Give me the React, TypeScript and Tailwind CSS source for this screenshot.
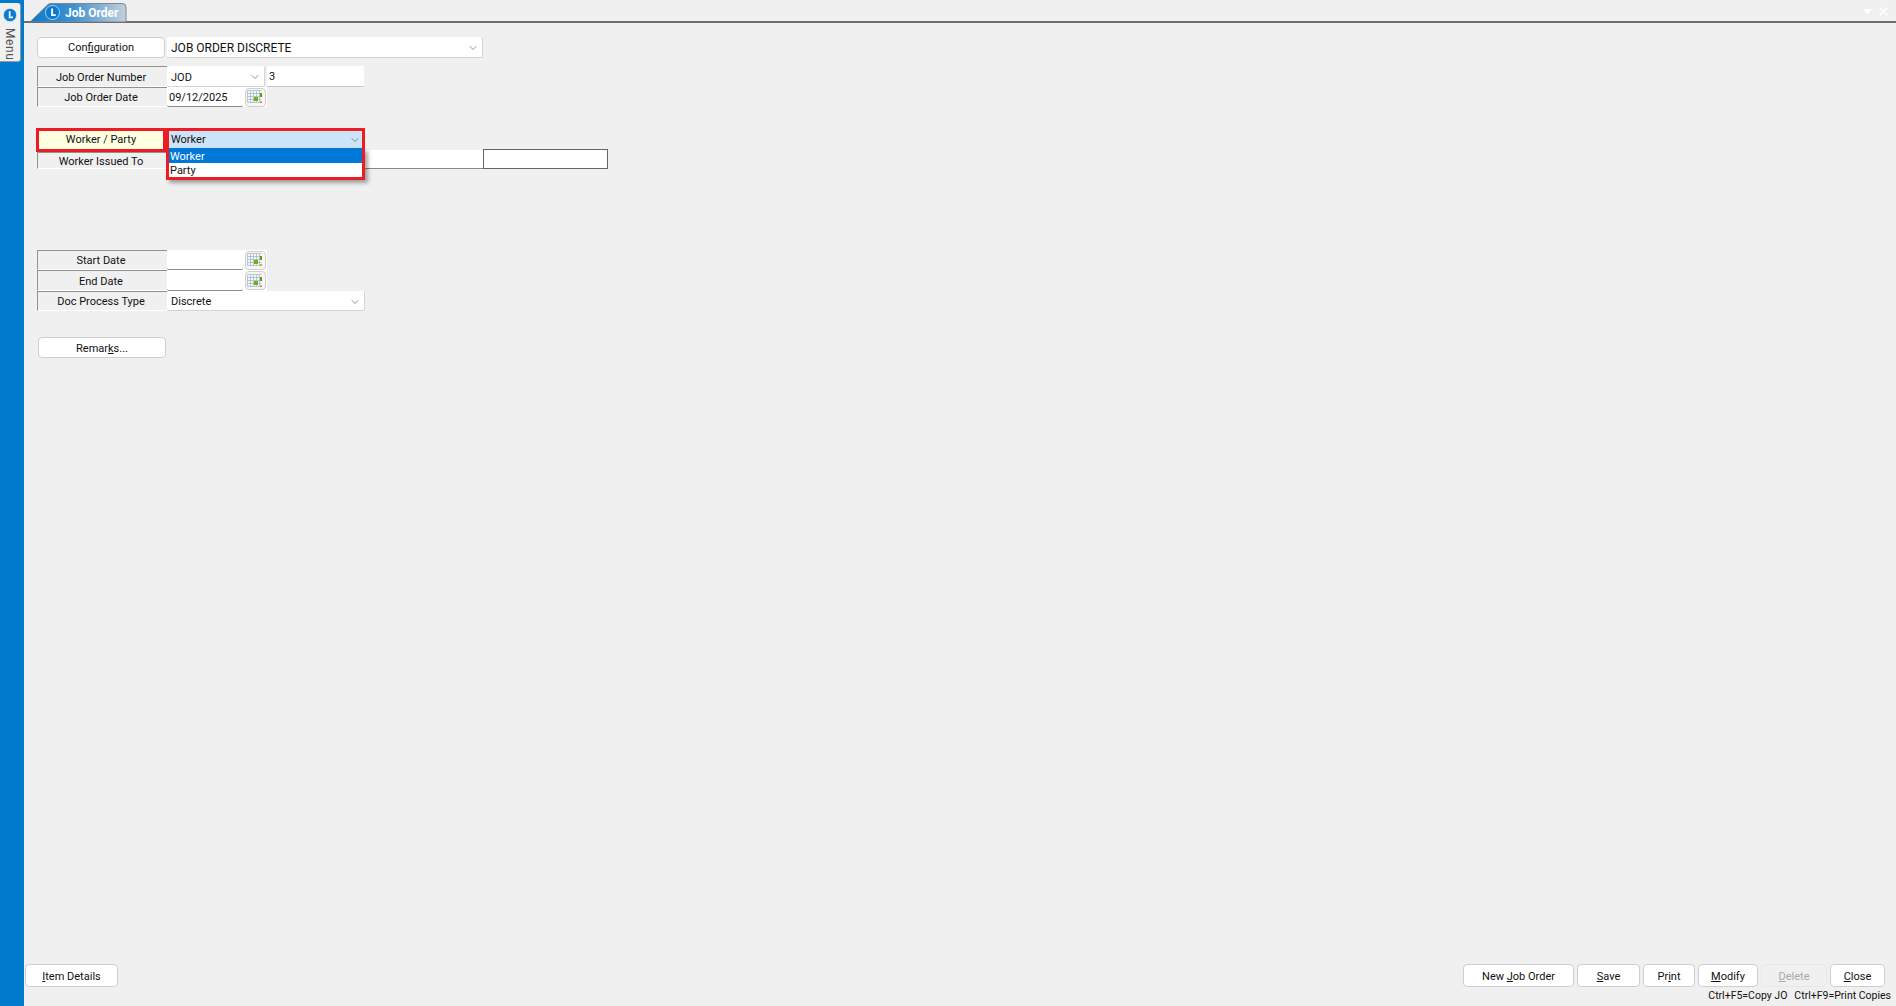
import { ChevronDown } from "lucide-react";
import type { ReactNode } from "react";

function FieldLabel({ children, className = "w-[130px] h-[20px]" }: { children: ReactNode; className?: string }) {
  return (
    <div
      className={`${className} shrink-0 flex items-center justify-center pr-[3px] pt-[1px] border-t border-l border-t-[#909090] border-l-[#909090] border-b border-b-white bg-[#f0f0f0]`}
    >
      {children}
    </div>
  );
}

function Combo({ value, className }: { value: string; className: string }) {
  return (
    <div className={`${className} flex items-center justify-between bg-white rounded-[2px] border-b border-r border-[#d4d4d4] pl-[4px] pr-[3px] pt-[2px]`}>
      <span>{value}</span>
      <ChevronDown size={12} strokeWidth={1.3} className="text-[#555]" />
    </div>
  );
}

function DateInput({ value = "" }: { value?: string }) {
  return (
    <div className="w-[76px] h-full bg-white border-b border-[#8a8a8a] rounded-b-[2px] pl-[2px] pt-[1px] flex items-center">
      {value}
    </div>
  );
}

function CalendarButton() {
  return (
    <div className="w-[24px] h-full bg-white flex items-center justify-center">
      <div className="w-[21px] h-[19px] rounded-[4px] border border-[#cfcfcf] bg-[#f6f6f6] flex items-center justify-center">
        <svg width="16" height="14" viewBox="0 0 16 14">
          <rect x="0.5" y="0.5" width="14" height="12" fill="#f4f7f9" />
          <path d="M0.5 1v11.5M3.5 1v11.5M6.5 1v11.5M9.5 1v11.5M12.5 1v11.5M0.5 0.5h14M0.5 3.5h14M0.5 6.5h14M0.5 9.5h14M0.5 12.5h14" stroke="#9db4c0" strokeWidth="0.7" />
          <rect x="7" y="7" width="4" height="4" fill="#76ad12" />
          <rect x="13" y="3" width="2" height="4" fill="#5f9a10" />
          <rect x="13" y="11" width="2" height="2" fill="#e8a04a" />
        </svg>
      </div>
    </div>
  );
}

function ActionButton({ children, className, disabled }: { children: ReactNode; className: string; disabled?: boolean }) {
  return (
    <div
      className={`${className} h-[23px] pt-[1px] flex items-center justify-center rounded-[4px] border ${
        disabled ? "bg-[#f0f0f0] border-[#e8e8e8] text-[#a8a8a8]" : "bg-white border-[#cfcfcf]"
      }`}
    >
      {children}
    </div>
  );
}

function LogoBall({ size }: { size: number }) {
  return (
    <svg width={size} height={size} viewBox="0 0 16 16">
      <circle cx="8" cy="8" r="7.5" fill="#0a7bd0" stroke="#dbeaf6" strokeWidth="0.8" />
      <path d="M6.6 3.8h2v6h2.8v2H6.6z" fill="#fff" />
    </svg>
  );
}

export default function App() {
  return (
    <div className="w-[1896px] h-[1006px] overflow-hidden flex bg-[#f0f0f0] text-[11px] leading-none text-[#111] font-['Roboto',Arial,sans-serif]">
      {/* Left menu strip */}
      <div className="w-[24px] shrink-0 bg-[#007acc] pt-[3px]">
        <div className="w-[21px] h-[59px] bg-[#f0f0f0] rounded-r-[3px] border-r border-b border-[#9a9a9a] flex flex-col items-center pt-[5px] gap-[6px]">
          <LogoBall size={14} />
          <span className="[writing-mode:vertical-rl] text-[12px] tracking-[0.6px] text-[#555]">Menu</span>
        </div>
      </div>

      <div className="flex-1 flex flex-col min-w-0">
        {/* Tab header */}
        <div className="h-[23px] shrink-0 border-b-2 border-[#6d6d6d] flex justify-between pl-[6px] pr-[8px] pt-[3px]">
          <div className="relative w-[97px] h-[19px] flex items-center pl-[23px] gap-[5px]">
            <svg className="absolute inset-0" width="97" height="19" viewBox="0 0 97 19">
              <defs>
                <linearGradient id="tabFill" x1="0" x2="1" y1="0" y2="0">
                  <stop offset="0" stopColor="#0a7ccb" />
                  <stop offset="0.45" stopColor="#3e90cf" />
                  <stop offset="1" stopColor="#c3d0dc" />
                </linearGradient>
              </defs>
              <path d="M0 19 L18 1.5 Q19 0.5 21 0.5 H92 Q96 0.5 96 4 V19 Z" fill="url(#tabFill)" stroke="#7d8790" strokeWidth="1" />
            </svg>
            <span className="relative -ml-[8px]">
              <LogoBall size={15} />
            </span>
            <span className="relative text-white font-bold text-[12px]">Job Order</span>
          </div>
          <div className="flex items-center gap-[7px] pb-[2px]">
            <svg width="9" height="5" viewBox="0 0 9 5">
              <path d="M0 0h9L4.5 5z" fill="#fff" />
            </svg>
            <svg width="9" height="9" viewBox="0 0 9 9">
              <path d="M0.5 0.5l8 8M8.5 0.5l-8 8" stroke="#fff" strokeWidth="1.3" />
            </svg>
          </div>
        </div>

        {/* Form */}
        <div className="flex-1 flex flex-col pl-[13px] pr-[11px]">
          <div className="mt-[14px] flex h-[21px] gap-[2px]">
            <div className="w-[128px] flex items-center justify-center bg-white rounded-[4px] border border-[#cfcfcf]">
              <span>
                Con<u>f</u>iguration
              </span>
            </div>
            <Combo value="JOB ORDER DISCRETE" className="w-[316px] text-[12px]" />
          </div>

          <div className="mt-[8px] flex h-[21px]">
            <FieldLabel className="w-[130px] h-[21px]">Job Order Number</FieldLabel>
            <Combo value="JOD" className="w-[98px]" />
            <div className="ml-[2px] w-[97px] bg-white border-b border-[#c8c8c8] pl-[2px] flex items-center">3</div>
          </div>

          <div className="flex h-[20px]">
            <FieldLabel className="w-[130px] h-[20px]">Job Order Date</FieldLabel>
            <DateInput value="09/12/2025" />
            <CalendarButton />
          </div>

          <div className="mt-[21px] flex h-[24px] relative">
            <div className="w-[130px] shrink-0 -ml-[1px] border-[3px] border-[#ed1c24] bg-[#ffffe1] flex items-center justify-center pb-[1px]">
              Worker / Party
            </div>
            <div className="w-[199px] border-[3px] border-[#ed1c24] border-b-0 bg-[#cce4f7] flex items-center justify-between pl-[2px] pr-[1px] pb-[4px]">
              <span>Worker</span>
              <ChevronDown size={12} strokeWidth={1.3} className="text-[#555]" />
            </div>
            {/* Open dropdown list */}
            <div className="absolute left-[129px] top-[20px] w-[199px] border-[3px] border-t-0 border-[#ed1c24] shadow-[3px_3px_4px_rgba(0,0,0,0.35)] z-10">
              <div className="h-[15px] bg-[#0078d7] text-white flex items-center pl-[1px] pt-[1px]">Worker</div>
              <div className="h-[14px] bg-white flex items-center pl-[1px]">Party</div>
            </div>
          </div>

          <div className="flex h-[17px]">
            <FieldLabel className="w-[130px] h-[17px]">Worker Issued To</FieldLabel>
            <div className="w-[316px] -mt-[2px] h-[19px] bg-white border-b border-[#8a8a8a]" />
            <div className="w-[125px] -mt-[3px] h-[20px] bg-white border border-[#666]" />
          </div>

          <div className="mt-[81px] flex h-[20px]">
            <FieldLabel className="w-[130px] h-[20px]">Start Date</FieldLabel>
            <DateInput />
            <CalendarButton />
          </div>
          <div className="flex h-[21px]">
            <FieldLabel className="w-[130px] h-[21px]">End Date</FieldLabel>
            <DateInput />
            <CalendarButton />
          </div>
          <div className="flex h-[20px]">
            <FieldLabel className="w-[130px] h-[20px]">Doc Process Type</FieldLabel>
            <Combo value="Discrete" className="w-[198px]" />
          </div>

          <div className="mt-[26px] ml-[1px] w-[128px] h-[21px] pt-[1px] flex items-center justify-center bg-white rounded-[4px] border border-[#cfcfcf]">
            <span>
              Remar<u>k</u>s...
            </span>
          </div>
        </div>

        {/* Bottom actions */}
        <div className="flex justify-between pl-[1px] pr-[11px]">
          <ActionButton className="w-[93px]">
            <span>
              <u>I</u>tem Details
            </span>
          </ActionButton>
          <div className="flex gap-[3px]">
            <ActionButton className="w-[111px]">
              <span>
                New <u>J</u>ob Order
              </span>
            </ActionButton>
            <ActionButton className="w-[63px]">
              <span>
                <u>S</u>ave
              </span>
            </ActionButton>
            <ActionButton className="w-[52px]">
              <span>
                Pr<u>i</u>nt
              </span>
            </ActionButton>
            <ActionButton className="w-[60px]">
              <span>
                <u>M</u>odify
              </span>
            </ActionButton>
            <ActionButton className="w-[66px]" disabled>
              <span>
                <u>D</u>elete
              </span>
            </ActionButton>
            <ActionButton className="w-[55px]">
              <span>
                <u>C</u>lose
              </span>
            </ActionButton>
          </div>
        </div>
        <div className="h-[19px] shrink-0 flex justify-end items-center pr-[5px] gap-[7px] text-[10.5px]">
          <span>Ctrl+F5=Copy JO</span>
          <span>Ctrl+F9=Print Copies</span>
        </div>
      </div>
    </div>
  );
}
